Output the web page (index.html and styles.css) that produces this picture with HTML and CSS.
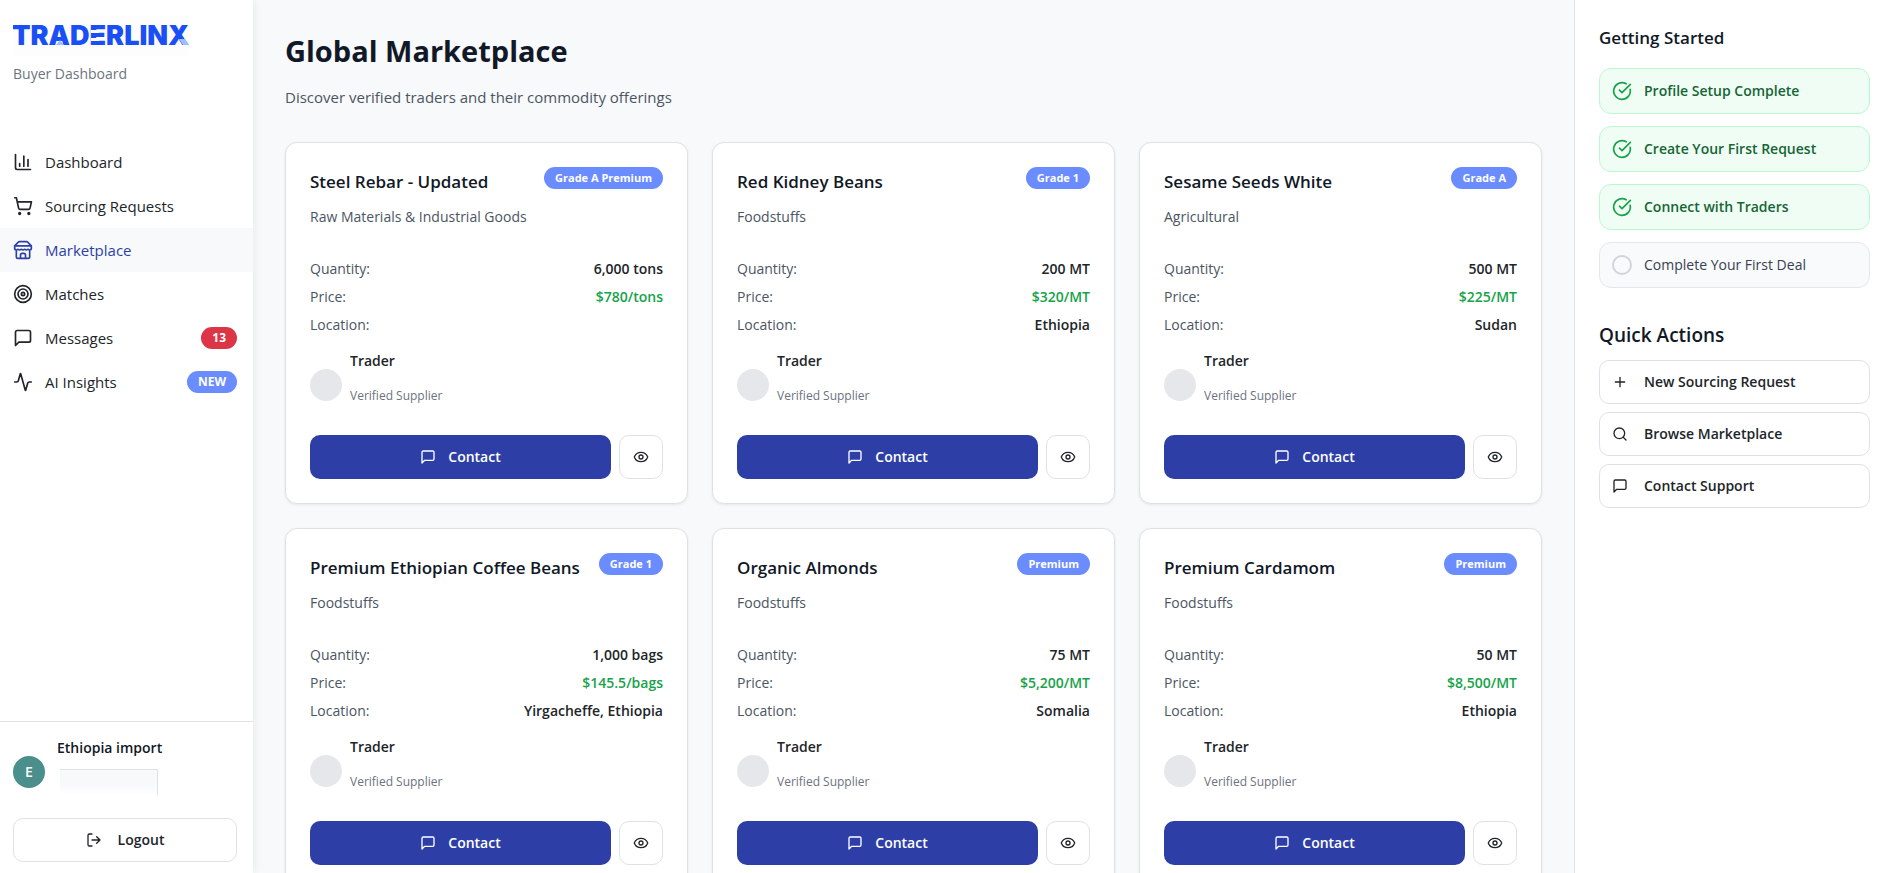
FILE: index.html
```html
<!DOCTYPE html>
<html lang="en">
<head>
<meta charset="utf-8">
<meta name="viewport" content="width=device-width, initial-scale=1">
<title>Global Marketplace - Traderlinx</title>
<link rel="stylesheet" href="styles.css">
</head>
<body>
<svg class="sprite" aria-hidden="true">
  <symbol id="i-chart" viewBox="0 0 24 24"><path d="M3 3v16a2 2 0 0 0 2 2h16M18 17V9M13 17V5M8 17v-3"/></symbol>
  <symbol id="i-cart" viewBox="0 0 24 24"><circle cx="8" cy="21" r="1"/><circle cx="19" cy="21" r="1"/><path d="M2.05 2.05h2l2.66 12.42a2 2 0 0 0 2 1.58h9.78a2 2 0 0 0 1.95-1.57l1.65-7.43H5.12"/></symbol>
  <symbol id="i-store" viewBox="0 0 24 24"><path d="m2 7 4.41-4.41A2 2 0 0 1 7.83 2h8.34a2 2 0 0 1 1.42.59L22 7M4 12v8a2 2 0 0 0 2 2h12a2 2 0 0 0 2-2v-8M15 22v-4a2 2 0 0 0-2-2h-2a2 2 0 0 0-2 2v4M2 7h20M22 7v3a2 2 0 0 1-2 2a2.7 2.7 0 0 1-1.59-.63.7.7 0 0 0-.82 0A2.7 2.7 0 0 1 16 12a2.7 2.7 0 0 1-1.59-.63.7.7 0 0 0-.82 0A2.7 2.7 0 0 1 12 12a2.7 2.7 0 0 1-1.59-.63.7.7 0 0 0-.82 0A2.7 2.7 0 0 1 8 12a2.7 2.7 0 0 1-1.59-.63.7.7 0 0 0-.82 0A2.7 2.7 0 0 1 4 12a2 2 0 0 1-2-2V7"/></symbol>
  <symbol id="i-target" viewBox="0 0 24 24"><circle cx="12" cy="12" r="10"/><circle cx="12" cy="12" r="6"/><circle cx="12" cy="12" r="2"/></symbol>
  <symbol id="i-message" viewBox="0 0 24 24"><path d="M21 15a2 2 0 0 1-2 2H7l-4 4V5a2 2 0 0 1 2-2h14a2 2 0 0 1 2 2z"/></symbol>
  <symbol id="i-activity" viewBox="0 0 24 24"><path d="M22 12h-2.48a2 2 0 0 0-1.93 1.46l-2.35 8.36a.25.25 0 0 1-.48 0L9.24 2.18a.25.25 0 0 0-.48 0l-2.35 8.36A2 2 0 0 1 4.49 12H2"/></symbol>
  <symbol id="i-logout" viewBox="0 0 24 24"><path d="M9 21H5a2 2 0 0 1-2-2V5a2 2 0 0 1 2-2h4M16 17l5-5-5-5M21 12H9"/></symbol>
  <symbol id="i-eye" viewBox="0 0 24 24"><path d="M2.06 12.35a1 1 0 0 1 0-.7 10.75 10.75 0 0 1 19.88 0 1 1 0 0 1 0 .7 10.75 10.75 0 0 1-19.88 0"/><circle cx="12" cy="12" r="3"/></symbol>
  <symbol id="i-check" viewBox="0 0 24 24"><path d="M21.8 10A10 10 0 1 1 17 3.34M9 11l3 3L22 4"/></symbol>
  <symbol id="i-plus" viewBox="0 0 24 24"><path d="M5 12h14M12 5v14"/></symbol>
  <symbol id="i-search" viewBox="0 0 24 24"><circle cx="11" cy="11" r="8"/><path d="m21 21-4.3-4.3"/></symbol>
</svg>

<div class="app">
  <aside class="sidebar">
    <header class="brand">
      <svg class="logo" viewBox="0 0 176 40" role="img" aria-label="Traderlinx">
        <text class="logo-text" x="-1" y="29">TRADERLINX</text>
        <path class="logo-accent" d="M43 29l4-5 4 5zM166 23h6l4 6h-6z"/>
        <path class="logo-cut" d="M78 14h8v3h-8zM78 22h8v3h-8z"/>
      </svg>
      <p class="brand-sub">Buyer Dashboard</p>
    </header>
    <nav class="nav">
      <a class="nav-link" href="#"><svg class="icon"><use href="#i-chart"/></svg>Dashboard</a>
      <a class="nav-link" href="#"><svg class="icon"><use href="#i-cart"/></svg>Sourcing Requests</a>
      <a class="nav-link active" href="#"><svg class="icon"><use href="#i-store"/></svg>Marketplace</a>
      <a class="nav-link" href="#"><svg class="icon"><use href="#i-target"/></svg>Matches</a>
      <a class="nav-link" href="#"><svg class="icon"><use href="#i-message"/></svg>Messages<span class="badge alert">13</span></a>
      <a class="nav-link" href="#"><svg class="icon"><use href="#i-activity"/></svg>AI Insights<span class="badge">NEW</span></a>
    </nav>
    <footer class="account">
      <div class="user">
        <span class="avatar teal">E</span>
        <div class="user-info">
          <p class="user-name">Ethiopia import</p>
          <div class="redacted"></div>
        </div>
      </div>
      <button class="btn logout" type="button"><svg class="icon small"><use href="#i-logout"/></svg>Logout</button>
    </footer>
  </aside>

  <main class="main">
    <h1 class="page-title">Global Marketplace</h1>
    <p class="page-sub">Discover verified traders and their commodity offerings</p>
    <div class="grid">
      <article class="card">
        <header class="card-head"><h2 class="card-title">Steel Rebar - Updated</h2><span class="badge">Grade A Premium</span></header>
        <p class="category">Raw Materials &amp; Industrial Goods</p>
        <dl class="facts">
          <div class="fact"><dt>Quantity:</dt><dd>6,000 tons</dd></div>
          <div class="fact"><dt>Price:</dt><dd class="price">$780/tons</dd></div>
          <div class="fact"><dt>Location:</dt><dd></dd></div>
        </dl>
        <div class="trader"><span class="avatar"></span><div class="trader-info"><p class="trader-name">Trader</p><p class="trader-role">Verified Supplier</p></div></div>
        <div class="actions"><button class="btn primary" type="button"><svg class="icon small"><use href="#i-message"/></svg>Contact</button><button class="btn view" type="button" aria-label="View"><svg class="icon small"><use href="#i-eye"/></svg></button></div>
      </article>
      <article class="card">
        <header class="card-head"><h2 class="card-title">Red Kidney Beans</h2><span class="badge">Grade 1</span></header>
        <p class="category">Foodstuffs</p>
        <dl class="facts">
          <div class="fact"><dt>Quantity:</dt><dd>200 MT</dd></div>
          <div class="fact"><dt>Price:</dt><dd class="price">$320/MT</dd></div>
          <div class="fact"><dt>Location:</dt><dd>Ethiopia</dd></div>
        </dl>
        <div class="trader"><span class="avatar"></span><div class="trader-info"><p class="trader-name">Trader</p><p class="trader-role">Verified Supplier</p></div></div>
        <div class="actions"><button class="btn primary" type="button"><svg class="icon small"><use href="#i-message"/></svg>Contact</button><button class="btn view" type="button" aria-label="View"><svg class="icon small"><use href="#i-eye"/></svg></button></div>
      </article>
      <article class="card">
        <header class="card-head"><h2 class="card-title">Sesame Seeds White</h2><span class="badge">Grade A</span></header>
        <p class="category">Agricultural</p>
        <dl class="facts">
          <div class="fact"><dt>Quantity:</dt><dd>500 MT</dd></div>
          <div class="fact"><dt>Price:</dt><dd class="price">$225/MT</dd></div>
          <div class="fact"><dt>Location:</dt><dd>Sudan</dd></div>
        </dl>
        <div class="trader"><span class="avatar"></span><div class="trader-info"><p class="trader-name">Trader</p><p class="trader-role">Verified Supplier</p></div></div>
        <div class="actions"><button class="btn primary" type="button"><svg class="icon small"><use href="#i-message"/></svg>Contact</button><button class="btn view" type="button" aria-label="View"><svg class="icon small"><use href="#i-eye"/></svg></button></div>
      </article>
      <article class="card">
        <header class="card-head"><h2 class="card-title">Premium Ethiopian Coffee Beans</h2><span class="badge">Grade 1</span></header>
        <p class="category">Foodstuffs</p>
        <dl class="facts">
          <div class="fact"><dt>Quantity:</dt><dd>1,000 bags</dd></div>
          <div class="fact"><dt>Price:</dt><dd class="price">$145.5/bags</dd></div>
          <div class="fact"><dt>Location:</dt><dd>Yirgacheffe, Ethiopia</dd></div>
        </dl>
        <div class="trader"><span class="avatar"></span><div class="trader-info"><p class="trader-name">Trader</p><p class="trader-role">Verified Supplier</p></div></div>
        <div class="actions"><button class="btn primary" type="button"><svg class="icon small"><use href="#i-message"/></svg>Contact</button><button class="btn view" type="button" aria-label="View"><svg class="icon small"><use href="#i-eye"/></svg></button></div>
      </article>
      <article class="card">
        <header class="card-head"><h2 class="card-title">Organic Almonds</h2><span class="badge">Premium</span></header>
        <p class="category">Foodstuffs</p>
        <dl class="facts">
          <div class="fact"><dt>Quantity:</dt><dd>75 MT</dd></div>
          <div class="fact"><dt>Price:</dt><dd class="price">$5,200/MT</dd></div>
          <div class="fact"><dt>Location:</dt><dd>Somalia</dd></div>
        </dl>
        <div class="trader"><span class="avatar"></span><div class="trader-info"><p class="trader-name">Trader</p><p class="trader-role">Verified Supplier</p></div></div>
        <div class="actions"><button class="btn primary" type="button"><svg class="icon small"><use href="#i-message"/></svg>Contact</button><button class="btn view" type="button" aria-label="View"><svg class="icon small"><use href="#i-eye"/></svg></button></div>
      </article>
      <article class="card">
        <header class="card-head"><h2 class="card-title">Premium Cardamom</h2><span class="badge">Premium</span></header>
        <p class="category">Foodstuffs</p>
        <dl class="facts">
          <div class="fact"><dt>Quantity:</dt><dd>50 MT</dd></div>
          <div class="fact"><dt>Price:</dt><dd class="price">$8,500/MT</dd></div>
          <div class="fact"><dt>Location:</dt><dd>Ethiopia</dd></div>
        </dl>
        <div class="trader"><span class="avatar"></span><div class="trader-info"><p class="trader-name">Trader</p><p class="trader-role">Verified Supplier</p></div></div>
        <div class="actions"><button class="btn primary" type="button"><svg class="icon small"><use href="#i-message"/></svg>Contact</button><button class="btn view" type="button" aria-label="View"><svg class="icon small"><use href="#i-eye"/></svg></button></div>
      </article>
    </div>
  </main>

  <aside class="panel">
    <section>
      <h2 class="panel-title">Getting Started</h2>
      <ul class="steps">
        <li class="step done"><svg class="icon"><use href="#i-check"/></svg>Profile Setup Complete</li>
        <li class="step done"><svg class="icon"><use href="#i-check"/></svg>Create Your First Request</li>
        <li class="step done"><svg class="icon"><use href="#i-check"/></svg>Connect with Traders</li>
        <li class="step"><span class="ring"></span>Complete Your First Deal</li>
      </ul>
    </section>
    <section>
      <h2 class="panel-title large">Quick Actions</h2>
      <div class="quick">
        <button class="btn quick-btn" type="button"><svg class="icon small"><use href="#i-plus"/></svg>New Sourcing Request</button>
        <button class="btn quick-btn" type="button"><svg class="icon small"><use href="#i-search"/></svg>Browse Marketplace</button>
        <button class="btn quick-btn" type="button"><svg class="icon small"><use href="#i-message"/></svg>Contact Support</button>
      </div>
    </section>
  </aside>
</div>
</body>
</html>
```
FILE: styles.css
```css
* { box-sizing: border-box; }

body,
h1, h2, p, ul, dl, dd {
  margin: 0;
  padding: 0;
}

body {
  font-family: "Open Sans", "Noto Sans", sans-serif;
  font-size: 14px;
  line-height: 20px;
  color: #212529;
  background: #f8f9fb;
}

.sprite {
  position: absolute;
  width: 0;
  height: 0;
}

.icon {
  width: 20px;
  height: 20px;
  flex: none;
  fill: none;
  stroke: currentColor;
  stroke-width: 2;
  stroke-linecap: round;
  stroke-linejoin: round;
}

.icon.small {
  width: 16px;
  height: 16px;
}

.app {
  display: grid;
  grid-template-columns: 253px 1fr 312px;
  height: 100vh;
  overflow: hidden;
}

/* Sidebar */
.sidebar {
  display: flex;
  flex-direction: column;
  background: #fff;
  box-shadow: 0 0 10px rgba(0, 0, 0, 0.08);
  z-index: 1;
}

.brand { padding: 16px 13px 0; }

.logo {
  display: block;
  width: 176px;
  height: 40px;
  background: #fdfdfd;
}

.logo-text {
  font-family: Inter, sans-serif;
  font-size: 27px;
  font-weight: 900;
  fill: #1a4ff5;
}

.logo-accent { fill: #9dc0fb; }
.logo-cut { fill: #fdfdfd; }

.brand-sub {
  margin-top: 8px;
  color: #6c757d;
}

.nav { margin-top: 56px; }

.nav-link {
  display: flex;
  align-items: center;
  gap: 12px;
  height: 44px;
  padding: 0 16px 0 13px;
  font-size: 15px;
  color: #212529;
  text-decoration: none;
}

.nav-link.active {
  color: #2d3fa6;
  background: #f8f9fb;
}

.badge {
  flex: none;
  padding: 0 11px;
  border-radius: 11px;
  font-size: 11px;
  line-height: 22px;
  font-weight: 700;
  color: #fff;
  background: #6b8cff;
}

.nav-link .badge {
  margin-left: auto;
  font-size: 12px;
}

.badge.alert { background: #dc3545; }

.account {
  margin-top: auto;
  padding: 16px 16px 11px 13px;
  border-top: 1px solid #dee2e6;
}

.user {
  display: flex;
  align-items: center;
  gap: 12px;
}

.avatar {
  display: flex;
  align-items: center;
  justify-content: center;
  flex: none;
  width: 32px;
  height: 32px;
  border-radius: 50%;
  background: #e5e7eb;
}

.avatar.teal {
  font-weight: 600;
  color: #fff;
  background: #4b8f8c;
}

.user-info { padding-bottom: 11px; }

.user-name {
  font-weight: 600;
  color: #111827;
}

.redacted {
  width: 98px;
  height: 26px;
  margin: 11px 0 0 3px;
  border-top: 1px solid #dee2e6;
  border-right: 1px solid #dee2e6;
  background: linear-gradient(#f8f9fb 60%, #fff);
}

.btn {
  display: flex;
  align-items: center;
  justify-content: center;
  height: 44px;
  border: 1px solid #dee2e6;
  border-radius: 10px;
  font: inherit;
  font-weight: 600;
  color: #212529;
  background: #fff;
}

.logout {
  width: 100%;
  gap: 16px;
  margin-top: 12px;
}

/* Listings */
.main {
  padding: 32px;
  overflow: hidden;
}

.page-title {
  font-size: 29px;
  line-height: 38px;
  font-weight: 700;
  color: #111827;
}

.page-sub {
  margin-top: 15px;
  font-size: 15px;
  line-height: 24px;
  color: #4b5563;
}

.grid {
  display: grid;
  grid-template-columns: repeat(3, 1fr);
  gap: 24px;
  margin-top: 33px;
}

.card {
  padding: 24px;
  border: 1px solid #dee2e6;
  border-radius: 12px;
  background: #fff;
  box-shadow: 0 1px 3px rgba(0, 0, 0, 0.08);
}

.card-head {
  display: flex;
  align-items: flex-start;
  justify-content: space-between;
}

.card-title {
  font-size: 17px;
  line-height: 30px;
  font-weight: 600;
  color: #111827;
}

.category {
  margin-top: 10px;
  color: #4b5563;
}

.facts {
  display: grid;
  gap: 8px;
  margin-top: 32px;
}

.fact {
  display: flex;
  justify-content: space-between;
}

.fact dt { color: #4b5563; }
.fact dd { font-weight: 600; }
.fact .price { color: #16a34a; }

.trader {
  display: flex;
  align-items: center;
  gap: 8px;
  margin-top: 16px;
}

.trader-info { padding-bottom: 14px; }
.trader-name { font-weight: 600; }

.trader-role {
  margin-top: 16px;
  font-size: 12px;
  line-height: 18px;
  color: #6b7280;
}

.actions {
  display: flex;
  gap: 8px;
  margin-top: 16px;
}

.primary {
  flex: 1;
  gap: 12px;
  border: 0;
  color: #fff;
  background: #2d3fa6;
}

.view {
  width: 44px;
  padding: 0;
}

/* Right panel */
.panel {
  padding: 24px 16px 24px 24px;
  border-left: 1px solid #dee2e6;
  background: #fff;
}

.panel-title {
  font-size: 17px;
  line-height: 28px;
  font-weight: 600;
  color: #111827;
}

.panel-title.large {
  margin-top: 32px;
  font-size: 19px;
  line-height: 30px;
}

.steps {
  display: grid;
  gap: 12px;
  margin-top: 16px;
  list-style: none;
}

.step {
  display: flex;
  align-items: center;
  gap: 12px;
  height: 46px;
  padding: 0 12px;
  border: 1px solid #e5e7eb;
  border-radius: 12px;
  color: #374151;
  background: #f9fafb;
}

.step.done {
  font-weight: 600;
  color: #166534;
  border-color: #bbf7d0;
  background: #f0fdf4;
}

.step.done .icon { color: #16a34a; }

.ring {
  width: 20px;
  height: 20px;
  border: 2px solid #d1d5db;
  border-radius: 50%;
}

.quick {
  display: grid;
  gap: 8px;
  margin-top: 10px;
}

.quick-btn {
  justify-content: flex-start;
  gap: 16px;
  padding: 0 12px;
}
```
